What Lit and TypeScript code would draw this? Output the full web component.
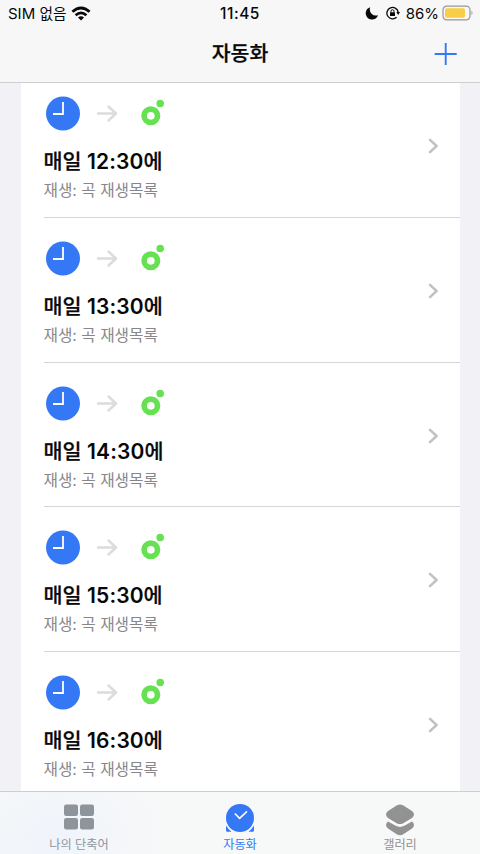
import { LitElement, html, css, svg } from "lit";
import { customElement, property } from "lit/decorators.js";

@customElement("automation-row")
class AutomationRow extends LitElement {
  @property() time = "";

  static styles = css`
    :host { display: flex; flex-direction: column; position: relative; box-sizing: border-box; height: 144.67px; margin-left: 23px; padding-top: 23px; border-bottom: 1px solid #d7d7d9; }
    .icons { display: block; width: 130px; height: 36px; }
    .title { height: 30px; margin-top: 15px; line-height: 30px; font-size: 20.7px; font-weight: 500; -webkit-text-stroke: 0.25px #080808; white-space: pre; color: #080808; }
    .num { font-size: 21px; font-weight: 600; -webkit-text-stroke: 0; letter-spacing: 0.1px; }
    .sub { height: 24px; margin-top: 2px; line-height: 24px; font-size: 15.7px; color: #87878a; white-space: pre; }
    .chevron { position: absolute; right: 20px; top: 64px; width: 13px; height: 18px; }
  `;

  render() {
    return html`
      <svg class="icons" viewBox="1 0 130 36">
        <circle cx="20" cy="17.5" r="17" fill="#3478f6" />
        <path d="M20 6V18H10" fill="none" stroke="#fff" stroke-width="1.8" />
        <path d="M55 17.5H73M65.5 10.5L73 17.5L65.5 24.5" fill="none" stroke="#dcdcdd" stroke-width="2.5" stroke-linecap="round" stroke-linejoin="round" />
        <circle cx="107.8" cy="19.800" r="6.7" fill="none" stroke="#66e152" stroke-width="5.7" />
        <circle cx="117.2" cy="7.5" r="3.8" fill="#66e152" />
      </svg>
      <div class="title">매일 <span class="num">${this.time}</span>에</div>
      <div class="sub">재생: 곡 재생목록</div>
      <svg class="chevron" viewBox="0 0 13 18">
        <path d="M3 2.8L9.6 9L3 15.2" fill="none" stroke="#c1c1c4" stroke-width="2.5" stroke-linecap="round" stroke-linejoin="round" />
      </svg>`;
  }
}

const tabs = [
  {
    label: "나의 단축어", cls: "mine",
    icon: svg`<g fill="#8e949c"><rect x="5" y="2.500" width="14" height="11.4" rx="2.2"/><rect x="21" y="2.500" width="14" height="11.4" rx="2.2"/><rect x="5" y="16.1" width="14" height="11.4" rx="2.2"/><rect x="21" y="16.1" width="14" height="11.4" rx="2.2"/></g>`,
  },
  {
    label: "자동화", cls: "active",
    icon: svg`<path d="M6 23.500Q8 27 11.500 29.800H7.500Q6 29.800 6 28.300ZM34 23.500Q32 27 28.500 29.800H32.500Q34 29.800 34 28.300Z" fill="#3478f6"/><circle cx="20" cy="16" r="14.700" fill="#f7f8f8"/><circle cx="20" cy="16" r="14" fill="#3478f6"/><path d="M14.800 11.500L19.600 16.300L27 9.300" fill="none" stroke="#fff" stroke-width="1.6"/>`,
  },
  {
    label: "갤러리", cls: "gallery",
    icon: svg`<path d="M17 3.2Q20 1.600 23 3.2L32 8.900Q36 12.500 32 16L23.300 21.200Q20 23 16.700 21.200L8 16Q4 12.500 8 8.900Z" fill="#929292"/><path d="M8 19.400Q4 22.800 8 26.600L16.700 32.300Q20 34.100 23.300 32.300L32 26.600Q36 22.800 32 19.400L24.300 23.800Q20 26 15.700 23.800Z" fill="#929292"/>`,
  },
];

@customElement("app-root")
class AppRoot extends LitElement {
  static styles = css`
    :host { display: flex; flex-direction: column; width: 480px; height: 854px; overflow: hidden; background: #f2f1f6; font-family: Inter, "Noto Sans CJK KR", sans-serif; color: #080808; }
    header { flex: none; box-sizing: border-box; height: 83px; background: #f7f7f7; border-bottom: 1px solid #cececf; }
    .status { display: grid; grid-template-columns: 1fr 1fr 1fr; align-items: center; height: 26px; }
    .left, .right { display: flex; align-items: center; }
    .left { padding: 1px 0 0 8px; font-size: 15px; line-height: 22px; white-space: pre; }
    .ko { font-size: 14.7px; }
    .wifi { width: 20px; height: 15px; margin-left: 5px; }
    .clock { text-align: center; font-size: 15.5px; font-weight: 500; letter-spacing: 0.5px; }
    .right { justify-content: flex-end; padding-right: 6px; }
    .moon { width: 14px; height: 14px; }
    .lock { width: 14px; height: 14px; margin-left: 7px; }
    .percent { margin-left: 6px; padding-top: 1px; font-size: 15px; line-height: 18px; }
    .battery { width: 32px; height: 16px; margin-left: 3px; }
    .nav { display: grid; grid-template-columns: 60px 1fr 60px; align-items: center; height: 55px; }
    h1 { grid-column: 2; margin: 0; padding-top: 1px; text-align: center; font-size: 20.5px; line-height: 30px; font-weight: 500; -webkit-text-stroke: 0.25px #080808; }
    .plus { width: 24px; height: 24px; margin-left: 14px; }
    main { flex: 1; min-height: 0; overflow: hidden; }
    .list { margin: -9.700px 20.5px 0; background: #fff; }
    footer { flex: none; display: grid; grid-template-columns: repeat(3, 1fr); box-sizing: border-box; height: 63px; border-top: 1px solid #cececf; background: radial-gradient(ellipse 110px 80px at 55px 45px, #f0f4fb, #f7f8f8); }
    .tab { display: flex; flex-direction: column; align-items: center; padding-top: 10px; font-size: 12.2px; line-height: 16px; color: #929292; white-space: nowrap; }
    .tab svg { width: 40px; height: 35px; flex: none; }
    .mine { color: #8e949c; padding-right: 2px; }
    .active { color: #3478f6; }
  `;

  render() {
    return html`
      <header>
        <div class="status">
          <div class="left"><span>SIM <span class="ko">없음</span></span><svg class="wifi" viewBox="0 0 20 15"><g fill="none" stroke="#080808" stroke-width="2.8"><path d="M1.400 5.800Q10 -1.900 18.600 5.800"/><path d="M4.600 9.200Q10 4.500 15.400 9.200"/></g><path d="M7 11.500Q10 9 13 11.500L10 14.500Z" fill="#080808"/></svg></div>
          <div class="clock">11:45</div>
          <div class="right">
            <svg class="moon" viewBox="0 0 14 14"><path d="M5.200 1.200A6.300 6.300 0 1 0 13 9.200A6.200 6.200 0 0 1 5.200 1.200Z" fill="#080808"/></svg>
            <svg class="lock" viewBox="0 0 14 14"><path d="M12.200 6A5.700 5.700 0 1 0 10.600 11.200" fill="none" stroke="#080808" stroke-width="1.300"/><path d="M10.300 6H14L12.200 9Z" fill="#080808"/><rect x="4" y="6.200" width="5" height="3.800" rx=".6" fill="#080808"/><path d="M5 6.500V5.200A1.500 1.500 0 0 1 8 5.200V6.500" fill="none" stroke="#080808"/></svg>
            <span class="percent">86%</span>
            <svg class="battery" viewBox="0 0 32 16"><rect x="1" y="1.200" width="27" height="13.600" rx="3.700" fill="none" stroke="#97979a" stroke-width="1.200"/><rect x="3" y="3.200" width="20" height="9.600" rx="1.800" fill="#f7ce45"/><path d="M29.500 5.800Q31.500 8 29.500 10.300Z" fill="#97979a"/></svg>
          </div>
        </div>
        <div class="nav">
          <h1>자동화</h1>
          <svg class="plus" viewBox="0 0 24 24"><path d="M11.700 1V23M.7 12H22.700" stroke="#3478f6" stroke-width="1.900"/></svg>
        </div>
      </header>
      <main>
        <div class="list">
          ${["12:30", "13:30", "14:30", "15:30", "16:30"].map((t) => html`<automation-row .time=${t}></automation-row>`)}
        </div>
      </main>
      <footer>
        ${tabs.map((t) => html`<div class="tab ${t.cls}"><svg viewBox="0 0 40 35">${t.icon}</svg><span>${t.label}</span></div>`)}
      </footer>`;
  }
}
